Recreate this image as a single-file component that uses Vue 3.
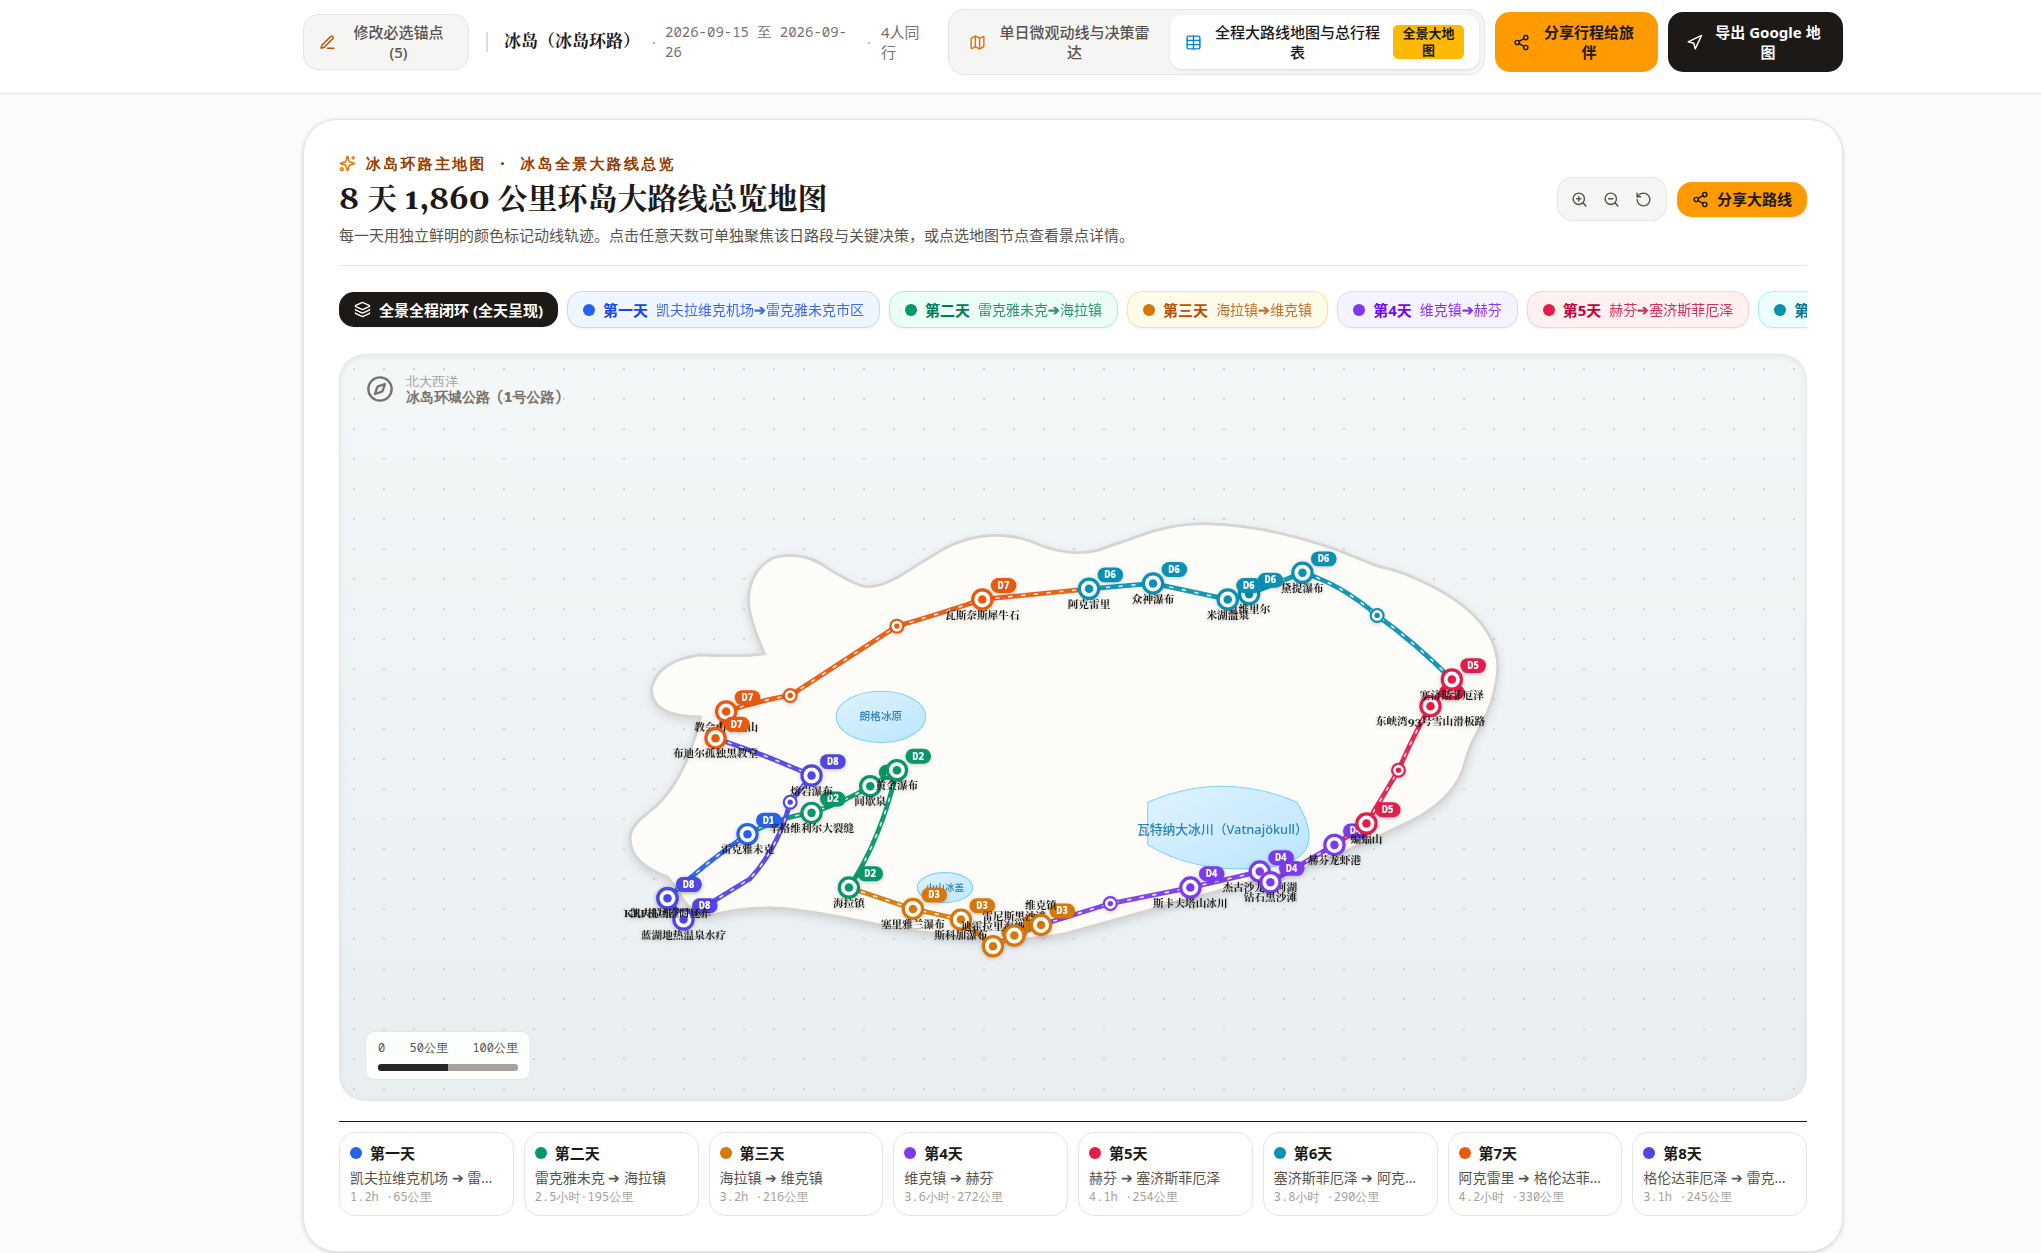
<script setup>
const days = [
  { id: 1, name: '第一天', route: ['凯夫拉维克机场', '雷克雅未克市区'], stats: '1.2h ·65公里', color: '#2563eb', bg: '#eff6ff', border: '#bedbff', text: '#1447e6' },
  { id: 2, name: '第二天', route: ['雷克雅未克', '海拉镇'], stats: '2.5小时·195公里', color: '#059669', bg: '#ecfdf5', border: '#a4f4cf', text: '#007a55' },
  { id: 3, name: '第三天', route: ['海拉镇', '维克镇'], stats: '3.2h ·216公里', color: '#d97706', bg: '#fffbeb', border: '#fee685', text: '#bb4d00' },
  { id: 4, name: '第4天', route: ['维克镇', '赫芬'], stats: '3.6小时·272公里', color: '#7c3aed', bg: '#f5f3ff', border: '#ddd6ff', text: '#7008e7' },
  { id: 5, name: '第5天', route: ['赫芬', '塞济斯菲厄泽'], stats: '4.1h ·254公里', color: '#e11d48', bg: '#fff1f2', border: '#ffccd3', text: '#c70036' },
  { id: 6, name: '第6天', route: ['塞济斯菲厄泽', '阿克雷里'], stats: '3.8小时 ·290公里', color: '#0891b2', bg: '#ecfeff', border: '#a2f4fd', text: '#007595' },
  { id: 7, name: '第7天', route: ['阿克雷里', '格伦达菲厄泽'], stats: '4.2小时 ·330公里', color: '#ea580c', bg: '#fff7ed', border: '#ffd6a7', text: '#ca3500' },
  { id: 8, name: '第8天', route: ['格伦达菲厄泽', '雷克雅未克'], stats: '3.1h ·245公里', color: '#4f46e5', bg: '#eef2ff', border: '#c6d2ff', text: '#432dd7' },
]
const colorOf = (d) => days[d - 1].color

const routes = [
  { d: 1, path: 'M120 510 Q155 477 195 450' },
  { d: 2, path: 'M195 450 Q225 434 255 430 Q285 420 310 405 L335 390 Q320 455 290 500' },
  { d: 3, path: 'M290 500 L350 520 L395 530 L425 555 L445 545 L470 535' },
  { d: 4, path: 'M470 535 L535 515 L610 500 L675 485 L685 495 L745 460' },
  { d: 5, path: 'M745 460 L775 440 L805 390 Q820 355 835 330 L855 305' },
  { d: 6, path: 'M855 305 Q820 270 785 245 Q750 215 715 205 L665 225 L645 230 L575 215 L515 220' },
  { d: 7, path: 'M515 220 L415 230 Q370 245 335 255 L235 320 Q205 325 175 335 L165 360' },
  { d: 8, path: 'M165 360 Q210 375 255 395 L235 420 Q224 463 197 492 L135 530 L120 510' },
]

const stops = [
  { d: 1, x: 120, y: 510, label: '凯夫拉维克机场' },
  { d: 1, x: 195, y: 450, label: '雷克雅未克' },
  { d: 2, x: 255, y: 430, label: '辛格维利尔大裂缝' },
  { d: 2, x: 310, y: 405, label: '间歇泉' },
  { d: 2, x: 335, y: 390, label: '黄金瀑布' },
  { d: 2, x: 290, y: 500, label: '海拉镇' },
  { d: 3, x: 350, y: 520, label: '塞里雅兰瀑布' },
  { d: 3, x: 395, y: 530, label: '斯科加瀑布' },
  { d: 3, x: 425, y: 555, label: '迪霍拉里海岬', above: true },
  { d: 3, x: 445, y: 545, label: '雷尼斯黑沙滩', above: true },
  { d: 3, x: 470, y: 535, label: '维克镇', above: true },
  { d: 4, x: 535, y: 515 },
  { d: 4, x: 610, y: 500, label: '斯卡夫塔山冰川' },
  { d: 4, x: 675, y: 485, label: '杰古沙龙冰河湖' },
  { d: 4, x: 685, y: 495, label: '钻石黑沙滩' },
  { d: 4, x: 745, y: 460, label: '赫芬龙虾港' },
  { d: 5, x: 775, y: 440, label: '蝙蝠山' },
  { d: 5, x: 805, y: 390 },
  { d: 5, x: 835, y: 330, label: '东峡湾93号雪山滑板路' },
  { d: 5, x: 855, y: 305, label: '塞济斯菲厄泽' },
  { d: 6, x: 785, y: 245 },
  { d: 6, x: 715, y: 205, label: '黛提瀑布' },
  { d: 6, x: 665, y: 225, label: '克维里尔' },
  { d: 6, x: 645, y: 230, label: '米湖温泉' },
  { d: 6, x: 575, y: 215, label: '众神瀑布' },
  { d: 6, x: 515, y: 220, label: '阿克雷里' },
  { d: 7, x: 415, y: 230, label: '瓦斯奈斯犀牛石' },
  { d: 7, x: 335, y: 255 },
  { d: 7, x: 235, y: 320 },
  { d: 7, x: 175, y: 335, label: '教会山草帽山' },
  { d: 7, x: 165, y: 360, label: '布迪尔孤独黑教堂' },
  { d: 8, x: 255, y: 395, label: '熔岩瀑布' },
  { d: 8, x: 235, y: 420 },
  { d: 8, x: 135, y: 530, label: '蓝湖地热温泉水疗' },
  { d: 8, x: 120, y: 510, label: 'KEF机场准时还车' },
]
</script>

<template>
  <div class="page">
    <header class="topbar">
      <div class="container topbar-row">
        <button class="btn edit" type="button">
          <svg class="ico amber" viewBox="0 0 24 24"><path d="M12 20h9" /><path d="M16.4 3.6a1 1 0 0 1 3 3L7.4 18.6a2 2 0 0 1-.9.5l-2.8.9a.5.5 0 0 1-.7-.6l.9-2.9a2 2 0 0 1 .5-.9z" /></svg>
          <span>修改必选锚点 (5)</span>
        </button>
        <i class="rule"></i>
        <strong class="trip">冰岛（冰岛环路）</strong>
        <span class="sep">·</span>
        <span class="dates">2026-09-15 至 2026-09-26</span>
        <span class="sep">·</span>
        <span class="people">4人同行</span>
        <nav class="tabs">
          <button class="tab first" type="button">
            <svg class="ico amber" viewBox="0 0 24 24"><path d="M14.1 5.6a2 2 0 0 0 1.8 0l3.7-1.9A1 1 0 0 1 21 4.6v12.8a1 1 0 0 1-.6.9l-4.5 2.3a2 2 0 0 1-1.8 0l-4.2-2.1a2 2 0 0 0-1.8 0l-3.7 1.8A1 1 0 0 1 3 19.4V6.6a1 1 0 0 1 .6-.9l4.5-2.3a2 2 0 0 1 1.8 0z" /><path d="M15 5.8v15M9 3.2v15" /></svg>
            <span>单日微观动线与决策雷达</span>
          </button>
          <button class="tab active" type="button">
            <svg class="ico sky" viewBox="0 0 24 24"><rect x="3" y="3" width="18" height="18" rx="2" /><path d="M3 9h18M3 15h18M12 3v18" /></svg>
            <span>全程大路线地图与总行程表</span>
            <em class="tag">全景大地图</em>
          </button>
        </nav>
        <button class="btn share" type="button">
          <svg class="ico" viewBox="0 0 24 24"><circle cx="18" cy="5" r="3" /><circle cx="6" cy="12" r="3" /><circle cx="18" cy="19" r="3" /><path d="M8.6 13.5l6.8 4M15.4 6.5l-6.8 4" /></svg>
          <span>分享行程给旅伴</span>
        </button>
        <button class="btn export" type="button">
          <svg class="ico" viewBox="0 0 24 24"><path d="M3 11l19-9-9 19-2-8z" /></svg>
          <span>导出 Google 地图</span>
        </button>
      </div>
    </header>

    <main class="container">
      <section class="card">
        <div class="head">
          <div>
            <p class="kicker">
              <svg class="ico" viewBox="0 0 24 24"><path d="M9.9 15.5A2 2 0 0 0 8.5 14.1l-6.1-1.6a.5.5 0 0 1 0-1l6.1-1.6A2 2 0 0 0 9.9 8.5l1.6-6.1a.5.5 0 0 1 1 0l1.6 6.1a2 2 0 0 0 1.4 1.4l6.1 1.6a.5.5 0 0 1 0 1l-6.1 1.6a2 2 0 0 0-1.4 1.4l-1.6 6.1a.5.5 0 0 1-1 0z" /><path d="M20 2v4M22 4h-4" /><circle cx="4" cy="20" r="2" /></svg>
              <span>冰岛环路主地图 · 冰岛全景大路线总览</span>
            </p>
            <h1>8 天 1,860 公里环岛大路线总览地图</h1>
            <p class="desc">每一天用独立鲜明的颜色标记动线轨迹。点击任意天数可单独聚焦该日路段与关键决策，或点选地图节点查看景点详情。</p>
          </div>
          <div class="actions">
            <div class="zoom">
              <button type="button" aria-label="放大"><svg class="ico" viewBox="0 0 24 24"><circle cx="11" cy="11" r="8" /><path d="M21 21l-4.3-4.3M11 8v6M8 11h6" /></svg></button>
              <button type="button" aria-label="缩小"><svg class="ico" viewBox="0 0 24 24"><circle cx="11" cy="11" r="8" /><path d="M21 21l-4.3-4.3M8 11h6" /></svg></button>
              <button type="button" aria-label="重置"><svg class="ico" viewBox="0 0 24 24"><path d="M3 12a9 9 0 1 0 9-9 9.7 9.7 0 0 0-6.7 2.7L3 8" /><path d="M3 3v5h5" /></svg></button>
            </div>
            <button class="share-route" type="button">
              <svg class="ico" viewBox="0 0 24 24"><circle cx="18" cy="5" r="3" /><circle cx="6" cy="12" r="3" /><circle cx="18" cy="19" r="3" /><path d="M8.6 13.5l6.8 4M15.4 6.5l-6.8 4" /></svg>
              <span>分享大路线</span>
            </button>
          </div>
        </div>

        <div class="chips">
          <button class="chip all" type="button">
            <svg class="ico" viewBox="0 0 24 24"><path d="M12.8 2.2a2 2 0 0 0-1.6 0L2.6 6.1a1 1 0 0 0 0 1.8l8.6 3.9a2 2 0 0 0 1.6 0l8.6-3.9a1 1 0 0 0 0-1.8z" /><path d="M2 12a1 1 0 0 0 .6.9l8.6 3.9a2 2 0 0 0 1.6 0l8.6-3.9A1 1 0 0 0 22 12" /><path d="M2 17a1 1 0 0 0 .6.9l8.6 3.9a2 2 0 0 0 1.6 0l8.6-3.9A1 1 0 0 0 22 17" /></svg>
            <b>全景全程闭环 (全天呈现)</b>
          </button>
          <button v-for="d in days" :key="d.id" class="chip" type="button" :style="{ background: d.bg, borderColor: d.border, color: d.text }">
            <i class="dot" :style="{ background: d.color }"></i>
            <b>{{ d.name }}</b>
            <span>{{ d.route[0] }}<strong>➔</strong>{{ d.route[1] }}</span>
          </button>
        </div>

        <div class="map">
          <svg class="canvas" viewBox="0 0 1000 700">
            <defs>
              <linearGradient id="ice" x1="0" y1="0" x2="1" y2="1">
                <stop offset="0" stop-color="#e0f2fe" />
                <stop offset="1" stop-color="#bae6fd" />
              </linearGradient>
            </defs>
            <path class="land" d="M120 490 Q85 477 85 454 Q85 442 103 429 Q136 404 151 340 Q105 340 105 314 Q110 288 150 282 Q190 284 211 281 Q195 245 196 228 Q198 202 219 191 Q247 183 272 202 Q300 219 309 218 Q320 218 338 208 Q355 197 375 185 Q400 170 429 170 Q450 170 471 180 Q500 190 523 184 L575 166 Q600 159 623 159 Q680 160 746 183 L786 199 Q797 201 808 205 Q898 240 898 294 Q896 325 880 352 Q872 366 868 380 Q860 420 803 444 Q745 472 719 480 L493 543 Q460 549 430 549 Q380 546 319 535 Q240 518 213 519 Q185 519 162 526 Q140 526 131 504 Z" />
            <ellipse class="ice" cx="320" cy="340" rx="42" ry="24" />
            <ellipse class="ice" cx="380" cy="500" rx="26" ry="14" />
            <path class="ice" d="M570 420 Q640 390 710 420 Q740 470 690 480 Q620 490 570 460 Z" />
            <text class="ice-name" x="320" y="343">朗格冰原</text>
            <text class="ice-name small" x="380" y="503">火山冰盖</text>
            <text class="ice-name big" x="640" y="450">瓦特纳大冰川（Vatnajökull）</text>

            <g v-for="r in routes" :key="r.d">
              <path class="road" :d="r.path" :stroke="colorOf(r.d)" />
              <path class="lane" :d="r.path" />
            </g>

            <g v-for="(s, i) in stops" :key="i" class="stop" :transform="`translate(${s.x} ${s.y})`">
              <template v-if="s.label">
                <circle r="9" fill="#fff" :stroke="colorOf(s.d)" stroke-width="3" />
                <circle r="4" :fill="colorOf(s.d)" />
                <rect x="8" y="-20" width="24" height="14" rx="7" :fill="colorOf(s.d)" />
                <text class="badge" x="20" y="-10">D{{ s.d }}</text>
                <text class="place" :y="s.above ? -15 : 18">{{ s.label }}</text>
              </template>
              <template v-else>
                <circle r="6" fill="#fff" :stroke="colorOf(s.d)" stroke-width="2" />
                <circle r="2.5" :fill="colorOf(s.d)" />
              </template>
            </g>
          </svg>
          <div class="compass">
            <svg class="ico" viewBox="0 0 24 24"><circle cx="12" cy="12" r="10" /><path d="M16.2 7.8l-1.8 5.4a2 2 0 0 1-1.3 1.3l-5.4 1.8 1.8-5.4a2 2 0 0 1 1.3-1.3z" /></svg>
            <div>
              <p class="sea">北大西洋</p>
              <p class="ring">冰岛环城公路（1号公路）</p>
            </div>
          </div>
          <div class="scale">
            <p><span>0</span><span>50公里</span><span>100公里</span></p>
            <div class="bar"></div>
          </div>
        </div>

        <div class="legend">
          <article v-for="d in days" :key="d.id" class="day">
            <h2><i class="dot" :style="{ background: d.color }"></i>{{ d.name }}</h2>
            <p class="route">{{ d.route[0] }} ➔ {{ d.route[1] }}</p>
            <p class="stats">{{ d.stats }}</p>
          </article>
        </div>
      </section>
    </main>
  </div>
</template>

<style>
body {
  margin: 0;
  background: #fcfbf9;
}
</style>

<style scoped>
.page {
  --serif: Gelasio, "Noto Serif CJK SC", serif;
  --mono: "Noto Sans Mono", "WenQuanYi Zen Hei Mono", "Noto Sans CJK SC", monospace;
  font-family: "Noto Sans", "Noto Sans CJK SC", sans-serif;
  font-size: 15px;
  line-height: 20px;
  color: #1c1917;
  padding-bottom: 3px;
}
p, h1, h2 { margin: 0; }
button {
  font: inherit;
  color: inherit;
  border: 0;
  background: none;
  padding: 0;
  cursor: pointer;
}
.ico {
  width: 17px;
  height: 17px;
  flex: none;
  fill: none;
  stroke: currentColor;
  stroke-width: 2;
  stroke-linecap: round;
  stroke-linejoin: round;
}
.amber { color: #e17100; }
.sky { color: #0084d1; }
.container {
  max-width: 1540px;
  margin: 0 auto;
}
.topbar, main.container { padding-left: 105px; }
main.container { padding-top: 25px; }
.topbar {
  background: #fff;
  border-bottom: 1px solid #e7e5e4;
}
.topbar-row {
  display: flex;
  align-items: center;
  min-height: 93px;
  padding-bottom: 9px;
  box-sizing: border-box;
}
.btn {
  display: flex;
  align-items: center;
  justify-content: center;
  gap: 8px;
  box-sizing: border-box;
  border-radius: 15px;
  flex: none;
  text-align: center;
}
.btn span { flex: 1; }
.edit {
  width: 166px;
  height: 56px;
  padding: 0 15px;
  background: #f5f5f4;
  border: 1px solid #e7e5e4;
  font-weight: 500;
  color: #57534d;
}
.edit .ico { color: #bb4d00; }
.rule {
  width: 2px;
  height: 20px;
  margin: 0 16px 0 17px;
  background: #dedcda;
}
.trip {
  width: 142px;
  font: 700 17px/28px var(--serif);
  white-space: nowrap;
}
.sep {
  color: #a6a09b;
  width: 16px;
  text-align: center;
}
.dates {
  width: 196px;
  margin-left: 3px;
  font: 14px/20px var(--mono);
  color: #79716b;
}
.people {
  padding: 0 18px 0 4px;
  box-sizing: border-box;
  flex: 1;
  color: #79716b;
}
.tabs {
  display: flex;
  flex: none;
  width: 537px;
  box-sizing: border-box;
  padding: 5px;
  background: #f5f5f4;
  border: 1px solid #e7e5e4;
  border-radius: 16px;
}
.tab {
  display: flex;
  align-items: center;
  gap: 8px;
  padding: 7px 15px;
  border-radius: 12px;
  color: #57534d;
  font-weight: 500;
  min-height: 54px;
  box-sizing: border-box;
}
.tab.first { width: 216px; }
.tab span { flex: 1; }
.tab.active {
  flex: 1;
  color: #1c1917;
  background: #fff;
  box-shadow: 0 1px 3px rgba(0, 0, 0, .1);
}
.tag {
  width: 71px;
  box-sizing: border-box;
  padding: 0 8px;
  font: 700 13px/17px "Noto Sans", "Noto Sans CJK SC", sans-serif;
  background: #ffb900;
  border-radius: 5px;
}
.share, .export {
  height: 60px;
  margin-left: 10px;
  padding: 0 18px;
  font-weight: 700;
}
.share { width: 163px; background: #ff9a00; }
.export { width: 175px; background: #1c1917; color: #fff; }

.card {
  background: #fff;
  border: 1px solid #e7e5e4;
  border-radius: 34px;
  padding: 33px 35px 35px;
  box-shadow: 0 1px 4px rgba(0, 0, 0, .16);
}
.head {
  display: flex;
  align-items: center;
  justify-content: space-between;
  padding-bottom: 20px;
  border-bottom: 1px solid #e7e5e4;
}
.kicker {
  display: flex;
  align-items: center;
  gap: 10px;
  font: 900 15px/20px var(--mono);
  letter-spacing: .15em;
  color: #973c00;
}
.kicker .ico { color: #e17100; }
h1 {
  font: 700 30px/40px var(--serif);
  margin: 7px 0 5px;
}
.desc { color: #57534d; }
.actions {
  display: flex;
  align-items: center;
  gap: 10px;
}
.zoom {
  display: flex;
  padding: 5px 6px;
  background: #f5f5f4;
  border: 1px solid #e7e5e4;
  border-radius: 15px;
}
.zoom button {
  width: 32px;
  height: 32px;
  display: grid;
  place-items: center;
  color: #57534d;
}
.share-route {
  display: flex;
  align-items: center;
  gap: 8px;
  height: 35px;
  padding: 0 15px;
  border-radius: 15px;
  background: #ff9a00;
  font-weight: 700;
  box-shadow: 0 1px 2px rgba(0, 0, 0, .1);
}
.chips {
  display: flex;
  align-items: center;
  gap: 9px;
  padding: 25px 0 26px;
  overflow: hidden;
}
.chip {
  display: flex;
  align-items: center;
  gap: 8px;
  flex: none;
  height: 37px;
  padding: 0 15px;
  box-sizing: border-box;
  border: 1px solid transparent;
  border-radius: 15px;
  box-shadow: 0 1px 2px rgba(0, 0, 0, .06);
  white-space: nowrap;
}
.chip span { font-size: 14px; opacity: .8; }
.chip.all {
  height: 35px;
  border: 0;
  padding: 0 15px;
  background: #1c1917;
  color: #fff;
}
.dot {
  width: 12px;
  height: 12px;
  border-radius: 50%;
  flex: none;
}
.map {
  position: relative;
  border-radius: 26px;
  overflow: hidden;
  background:
    radial-gradient(circle, #cbd5e1 1px, transparent 1px) 0 0 / 30px 30px,
    linear-gradient(#f3f7f8, #e9eef1);
  box-shadow: inset 0 0 0 1px #e5e7e7, inset 0 2px 8px rgba(0, 0, 0, .07);
}
.canvas {
  display: block;
  width: 100%;
  height: 747px;
}
.land {
  fill: #fdfcf9;
  stroke: #d6d3d1;
  stroke-width: 2.5;
  filter: drop-shadow(0 3px 4px rgba(28, 50, 60, .15));
}
.ice {
  fill: url(#ice);
  stroke: #7dd3fc;
  stroke-width: 1;
}
.ice-name {
  font-size: 10px;
  font-weight: 500;
  text-anchor: middle;
  fill: #0369a1;
  opacity: .8;
}
.ice-name.small { font-size: 9px; }
.ice-name.big { font-size: 12px; }
.road {
  fill: none;
  stroke-width: 4.5;
  stroke-linecap: round;
  stroke-linejoin: round;
  opacity: .95;
}
.lane {
  fill: none;
  stroke: #fff;
  stroke-width: 1.5;
  stroke-dasharray: 4 8;
  opacity: .85;
}
.stop { filter: drop-shadow(0 1px 2px rgba(0, 0, 0, .2)); }
.badge {
  font: 900 9px var(--mono);
  text-anchor: middle;
  fill: #fff;
}
.place {
  font: 700 10px var(--serif);
  text-anchor: middle;
  fill: #1c1917;
}
.compass {
  position: absolute;
  left: 27px;
  top: 19px;
  display: flex;
  align-items: center;
  gap: 12px;
  color: #79716b;
}
.compass .ico { width: 28px; height: 28px; }
.sea { font: 13px/16px var(--mono); color: #a6a09b; }
.ring { font: 900 14px/15px var(--mono); }
.scale {
  position: absolute;
  left: 26px;
  bottom: 21px;
  width: 140px;
  padding: 8px 12px;
  background: rgba(255, 255, 255, .85);
  border: 1px solid #e7e5e4;
  border-radius: 10px;
}
.scale p {
  display: flex;
  justify-content: space-between;
  font: 12px/16px var(--mono);
  color: #57534d;
}
.bar {
  height: 7px;
  margin-top: 8px;
  border-radius: 3px;
  background: linear-gradient(90deg, #292524 50%, #a8a29e 50%);
}
.legend {
  display: grid;
  grid-template-columns: repeat(8, minmax(0, 1fr));
  gap: 10px;
  margin-top: 20px;
  padding-top: 10px;
  border-top: 1px solid #1c1917;
}
.day {
  padding: 10px;
  border: 1px solid #e7e5e4;
  border-radius: 16px;
}
.day h2 {
  display: flex;
  align-items: center;
  gap: 8px;
  font-size: 15px;
  line-height: 20px;
  font-weight: 700;
}
.day .route {
  margin-top: 6px;
  font-size: 14px;
  line-height: 18px;
  color: #57534d;
  overflow: hidden;
  text-overflow: ellipsis;
  white-space: nowrap;
}
.day .stats {
  margin-top: 2px;
  font: 12px/16px var(--mono);
  color: #a6a09b;
}
</style>
